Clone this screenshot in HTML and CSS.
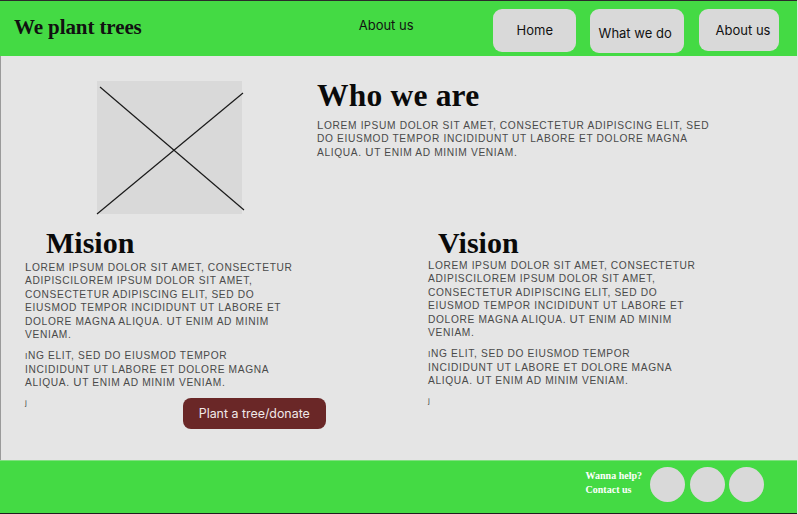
FILE: index.html
```html
<!DOCTYPE html>
<html lang="en">
<head>
<meta charset="utf-8">
<title>We plant trees</title>
<link rel="stylesheet" href="styles.css">
</head>
<body>
<div class="page">
  <header class="topbar">
    <h1 class="brand">We plant trees</h1>
    <a class="nav-link" href="#">About us</a>
    <nav class="nav-buttons">
      <a class="nav-btn nav-btn--home" href="#">Home</a>
      <a class="nav-btn nav-btn--what" href="#">What we do</a>
      <a class="nav-btn nav-btn--about" href="#">About us</a>
    </nav>
  </header>

  <main class="content">
    <section class="intro">
      <div class="placeholder">
        <svg width="150" height="136" viewBox="0 0 150 136">
          <rect x="1" y="1" width="145" height="133" fill="#d9d9d9"/>
          <line x1="4" y1="7" x2="148" y2="130" stroke="#1a1a1a" stroke-width="1.2"/>
          <line x1="1" y1="134" x2="147" y2="13" stroke="#1a1a1a" stroke-width="1.2"/>
        </svg>
      </div>
      <div class="who">
        <h2 class="heading heading--who">Who we are</h2>
        <p class="lorem lorem--who"><span class="cap">L</span>orem ipsum dolor sit amet, consectetur adipiscing elit, sed do eiusmod tempor incididunt ut labore et dolore magna aliqua. <span class="cap">U</span>t enim ad minim veniam.</p>
      </div>
    </section>

    <section class="columns">
      <div class="col col--mision">
        <h2 class="heading heading--mision">Mision</h2>
        <p class="lorem lorem--first"><span class="cap">L</span>orem ipsum dolor sit amet, consectetur adipiscilorem ipsum dolor sit amet, consectetur adipiscing elit, sed do eiusmod tempor incididunt ut labore et dolore magna aliqua. <span class="cap">U</span>t enim ad minim veniam.</p>
        <p class="lorem lorem--second"><span class="low">i</span>ng elit, sed do eiusmod tempor incididunt ut labore et dolore magna aliqua. <span class="cap">U</span>t enim ad minim veniam.</p>
        <div class="col-foot">
          <p class="tiny">j</p>
          <a class="donate" href="#">Plant a tree/donate</a>
        </div>
      </div>
      <div class="col col--vision">
        <h2 class="heading heading--vision">Vision</h2>
        <p class="lorem lorem--first"><span class="cap">L</span>orem ipsum dolor sit amet, consectetur adipiscilorem ipsum dolor sit amet, consectetur adipiscing elit, sed do eiusmod tempor incididunt ut labore et dolore magna aliqua. <span class="cap">U</span>t enim ad minim veniam.</p>
        <p class="lorem lorem--second"><span class="low">i</span>ng elit, sed do eiusmod tempor incididunt ut labore et dolore magna aliqua. <span class="cap">U</span>t enim ad minim veniam.</p>
        <p class="tiny">j</p>
      </div>
    </section>
  </main>

  <footer class="footer">
    <div class="footer-text">
      <span>Wanna help?</span>
      <span>Contact us</span>
    </div>
    <div class="socials">
      <span class="social"></span>
      <span class="social social--mid"></span>
      <span class="social"></span>
    </div>
  </footer>
</div>
</body>
</html>
```

FILE: styles.css
```css
* { box-sizing: border-box; }

html, body {
  margin: 0;
  padding: 0;
  background: #e5e5e5;
}

body {
  font-family: "Inter", "Liberation Sans", sans-serif;
  color: #111;
}

.page {
  width: 798px;
  height: 514px;
  display: flex;
  flex-direction: column;
}

/* ---------- header ---------- */
.topbar {
  width: 797px;
  height: 56px;
  background: #44da44;
  border-top: 1px solid #2b2b2b;
  display: flex;
  align-items: flex-start;
  padding: 0 0 0 14px;
}

.brand {
  margin: 14px 0 0 0;
  font-family: "Liberation Serif", serif;
  font-weight: bold;
  font-size: 21px;
  line-height: 24px;
  letter-spacing: -0.1px;
}

.nav-link {
  margin: 16px 0 0 217px;
  font-size: 13px;
  line-height: 16px;
  color: #111;
  text-decoration: none;
}

.nav-buttons {
  display: flex;
  margin: 8px 0 0 79px;
  gap: 14px;
}

.nav-btn {
  display: block;
  background: #d9d9d9;
  border-radius: 9px;
  color: #111;
  text-decoration: none;
  font-size: 13px;
  line-height: 16px;
}

.nav-btn--home {
  width: 83px;
  height: 43px;
  padding: 13px 0 0 24px;
}

.nav-btn--what {
  width: 94px;
  height: 44px;
  padding: 16px 0 0 9px;
}

.nav-btn--about {
  width: 80px;
  height: 42px;
  padding: 13px 0 0 17px;
  margin-left: 1px;
}

/* ---------- main ---------- */
.content {
  height: 405px;
  border-left: 1px solid #9a9a9a;
  background: #e5e5e5;
  display: flex;
  flex-direction: column;
}

.intro {
  display: flex;
  padding: 24px 0 0 95px;
  height: 171px;
}

.placeholder {
  width: 150px;
  height: 136px;
}

.placeholder svg { display: block; }

.who {
  margin-left: 71px;
  padding-top: 0;
}

.heading {
  margin: 0;
  font-family: "Liberation Serif", serif;
  font-weight: bold;
  font-size: 30px;
  line-height: 32px;
  color: #0a0a0a;
}

.heading--who {
  font-size: 31.5px;
  letter-spacing: 0.2px;
}

.lorem {
  margin: 0;
  font-family: "Liberation Sans", sans-serif;
  text-transform: uppercase;
  font-size: 10.2px;
  line-height: 13.4px;
  color: #4a4a4a;
  letter-spacing: 0.65px;
}

.lorem .cap {
  font-size: 11.4px;
  line-height: 1;
}

.lorem .low {
  font-size: 8.5px;
  line-height: 1;
}

.lorem--who {
  width: 405px;
  margin-top: 7px;
}

.columns {
  display: grid;
  grid-template-columns: 401px 1fr;
}

.col--mision { padding-left: 24px; }
.col--vision { padding-left: 26px; }

.col .lorem {
  width: 272px;
  margin-bottom: 8px;
}

.col .lorem--second { width: 262px; }

.col .lorem--first { margin-top: 2px; }
.col--vision .lorem--first { margin-top: 0; }

.heading--mision { margin-left: 21px; }
.heading--vision { margin-left: 10px; }

.tiny {
  margin: 0;
  font-family: "Liberation Sans", sans-serif;
  font-size: 8px;
  line-height: 10px;
  color: #4a4a4a;
}

.col-foot {
  display: flex;
  align-items: flex-start;
  margin-top: 1px;
}

.col-foot .tiny {
  margin-top: 0;
}

.donate {
  margin-left: 156px;
  width: 143px;
  height: 31px;
  border-radius: 8px;
  background: #6a2727;
  color: #f1e9e9;
  text-decoration: none;
  font-size: 12.4px;
  line-height: 31px;
  text-align: center;
}

/* ---------- footer ---------- */
.footer {
  width: 797px;
  height: 54px;
  margin-top: auto;
  background: #44da44;
  border-top: 1px solid #7fe07f;
  border-bottom: 1px solid #1e1e1e;
  display: flex;
  align-items: flex-start;
  justify-content: flex-end;
  padding: 6px 33px 0 0;
}

.footer-text {
  display: flex;
  flex-direction: column;
  margin-top: 2px;
  font-family: "Liberation Serif", serif;
  font-weight: bold;
  font-size: 10px;
  line-height: 14px;
  color: #ffffff;
}

.socials {
  display: flex;
  gap: 5px;
  margin-left: 8px;
}

.social {
  width: 35px;
  height: 35px;
  border-radius: 50%;
  background: #d9d9d9;
}

.social--mid { margin-right: -1px; }
```
